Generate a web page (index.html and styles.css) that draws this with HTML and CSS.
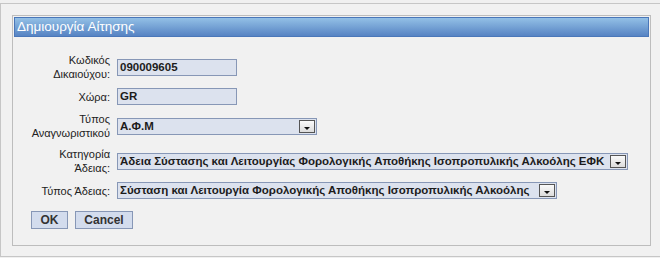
FILE: index.html
```html
<!DOCTYPE html>
<html lang="el">
<head>
<meta charset="utf-8">
<title>Δημιουργία Αίτησης</title>
<link rel="stylesheet" href="styles.css">
</head>
<body>
<div class="frame">
  <div class="panel">
    <div class="panel-title">Δημιουργία Αίτησης</div>
    <form class="form">
      <div class="row">
        <label class="lbl">Κωδικός<br>Δικαιούχου:</label>
        <div class="field w-short">090009605</div>
      </div>
      <div class="row">
        <label class="lbl">Χώρα:</label>
        <div class="field w-short">GR</div>
      </div>
      <div class="row">
        <label class="lbl">Τύπος<br>Αναγνωριστικού</label>
        <div class="field select w-mid"><span class="val">Α.Φ.Μ</span><span class="dd"></span></div>
      </div>
      <div class="row">
        <label class="lbl">Κατηγορία<br>Άδειας:</label>
        <div class="field select w-long"><span class="val">Άδεια Σύστασης και Λειτουργίας Φορολογικής Αποθήκης Ισοπροπυλικής Αλκοόλης ΕΦΚ</span><span class="dd"></span></div>
      </div>
      <div class="row">
        <label class="lbl">Τύπος Άδειας:</label>
        <div class="field select w-lg"><span class="val">Σύσταση και Λειτουργία Φορολογικής Αποθήκης Ισοπροπυλικής Αλκοόλης</span><span class="dd"></span></div>
      </div>
      <div class="actions">
        <button type="button" class="btn btn-ok">OK</button>
        <button type="button" class="btn btn-cancel">Cancel</button>
      </div>
    </form>
  </div>
</div>
</body>
</html>
```
FILE: styles.css
```css
html, body {
  margin: 0;
  padding: 0;
}
body {
  background: #f0f0f0;
  font-family: "Liberation Sans", Arial, sans-serif;
  font-size: 12px;
  color: #222;
  overflow: hidden;
}
.frame {
  margin-top: 3px;
  width: 660px;
  height: 254px;
  box-sizing: border-box;
  border: 1px solid #c6c6c6;
  border-right: none;
  background: #f1f1f1;
  padding: 11px 0 0 11px;
}
.panel {
  width: 639px;
  height: 231px;
  box-sizing: border-box;
  border: 1px solid #bdbdbd;
  padding: 1px;
}
.panel-title {
  height: 20px;
  box-sizing: border-box;
  border: 1px solid #4a77b9;
  background: linear-gradient(#93c0e6, #5683c3);
  color: #fff;
  font-size: 13.5px;
  line-height: 18px;
  padding-left: 2px;
}
.form {
  display: flex;
  flex-direction: column;
  gap: 7px;
  padding-top: 16px;
}
.row {
  display: flex;
  align-items: center;
  gap: 7px;
}
.lbl {
  width: 96px;
  text-align: right;
  line-height: 14px;
  font-size: 11px;
  color: #222;
}
.field {
  height: 17px;
  box-sizing: border-box;
  border: 1px solid #8797b6;
  background: #dce2ee;
  font-weight: bold;
  font-size: 11.5px;
  line-height: 15px;
  padding-left: 2px;
  color: #1c1c1c;
  display: flex;
  align-items: center;
}
.w-short { width: 120px; }
.w-mid { width: 200px; }
.w-long { width: 511px; }
.w-lg { width: 440px; }
.select .val {
  flex: 1;
  white-space: nowrap;
  overflow: hidden;
}
.dd {
  width: 16px;
  height: 13px;
  box-sizing: border-box;
  border: 1px solid #555;
  background: linear-gradient(#fafafa, #dcdcdc);
  margin-right: 1px;
  position: relative;
  flex: none;
}
.dd::after {
  content: "";
  position: absolute;
  left: 4px;
  top: 6px;
  border-left: 3px solid transparent;
  border-right: 3px solid transparent;
  border-top: 3px solid #111;
}
.actions {
  display: flex;
  gap: 7px;
  padding-left: 17px;
  margin-top: 5px;
}
.btn {
  height: 18px;
  box-sizing: border-box;
  border: 1px solid #8797b6;
  background: #d3dced;
  font-family: "Liberation Sans", Arial, sans-serif;
  font-weight: bold;
  font-size: 12px;
  color: #333;
  padding: 0;
  line-height: 16px;
}
.btn-ok { width: 37px; }
.btn-cancel { width: 58px; }
```
